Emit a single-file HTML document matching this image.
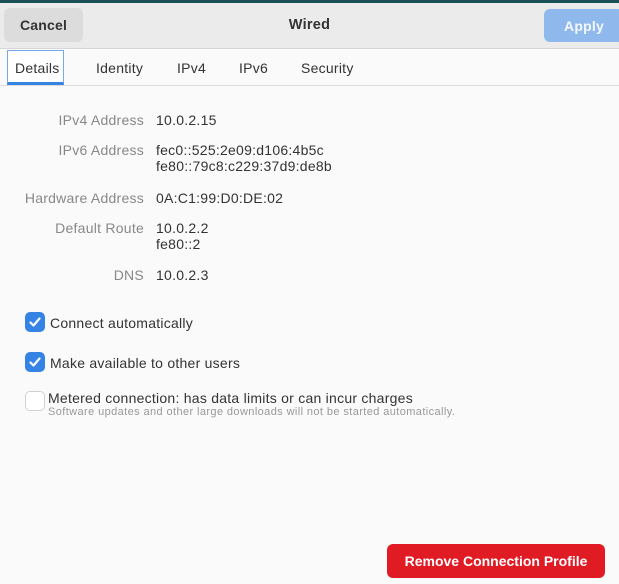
<!DOCTYPE html>
<html><head><style>
*{margin:0;padding:0;box-sizing:border-box}
body{width:619px;height:584px;overflow:hidden;background:#fafafa;font-family:"Liberation Sans",sans-serif;color:#2e3436;position:relative;font-size:14px;letter-spacing:0.25px}
.abs{position:absolute}
.top{left:0;top:0;width:619px;height:3px;background:#1c4f55}
.hdr{left:0;top:3px;width:619px;height:46px;background:#ebebeb;border-bottom:1px solid #d6d6d6}
.btn{border-radius:6px;font-weight:bold;font-size:14px;text-align:center;line-height:34px;letter-spacing:0.2px}
.tabs{left:0;top:49px;width:619px;height:37px;background:#fafafa;border-bottom:1px solid #dcdcdc}
.tab{top:10px;font-size:14px;color:#333}
.lbl{color:#888;text-align:right;right:475px;font-size:14px}
.val{left:156px;font-size:14px;color:#333;line-height:16px}
.cb{left:25px;width:20px;height:20px;border-radius:5px;background:#3584e4}
.cb svg{position:absolute;left:3px;top:3px}
.ct{left:50px;font-size:14px;color:#333}
</style></head><body>
<div class="abs top"></div>
<div class="abs hdr"></div>
<div class="abs btn" style="left:4px;top:8px;width:79px;height:34px;background:#dcdcdc;color:#333">Cancel</div>
<div class="abs" style="left:0;width:619px;top:17px;text-align:center;font-weight:bold;font-size:14.5px;color:#333">Wired</div>
<div class="abs btn" style="left:544px;top:9px;width:80px;height:33px;background:#8fb9ec;color:#f4f8fd">Apply</div>
<div class="abs tabs"></div>
<div class="abs" style="left:7px;top:50px;width:57px;height:35px;border:1px solid #76a9e8;border-bottom:3px solid #3584e4;background:#fff"></div>
<div class="abs tab" style="left:15px;top:60px">Details</div>
<div class="abs tab" style="left:96px;top:60px">Identity</div>
<div class="abs tab" style="left:177px;top:60px">IPv4</div>
<div class="abs tab" style="left:239px;top:60px">IPv6</div>
<div class="abs tab" style="left:301px;top:60px">Security</div>

<div class="abs lbl" style="top:112px">IPv4 Address</div>
<div class="abs val" style="top:112px">10.0.2.15</div>
<div class="abs lbl" style="top:142px">IPv6 Address</div>
<div class="abs val" style="top:142px">fec0::525:2e09:d106:4b5c<br>fe80::79c8:c229:37d9:de8b</div>
<div class="abs lbl" style="top:190px">Hardware Address</div>
<div class="abs val" style="top:190px">0A:C1:99:D0:DE:02</div>
<div class="abs lbl" style="top:220px">Default Route</div>
<div class="abs val" style="top:220px">10.0.2.2<br>fe80::2</div>
<div class="abs lbl" style="top:267px">DNS</div>
<div class="abs val" style="top:267px">10.0.2.3</div>

<div class="abs cb" style="top:312px"><svg width="14" height="14" viewBox="0 0 14 14"><path d="M2.5 7.5 L5.5 10.5 L11.5 3.5" stroke="#fff" stroke-width="2.2" fill="none" stroke-linecap="round" stroke-linejoin="round"/></svg></div>
<div class="abs ct" style="top:315px">Connect automatically</div>
<div class="abs cb" style="top:352px"><svg width="14" height="14" viewBox="0 0 14 14"><path d="M2.5 7.5 L5.5 10.5 L11.5 3.5" stroke="#fff" stroke-width="2.2" fill="none" stroke-linecap="round" stroke-linejoin="round"/></svg></div>
<div class="abs ct" style="top:355px">Make available to other users</div>
<div class="abs cb" style="top:391px;background:#fff;border:1px solid #d0d0d0"></div>
<div class="abs ct" style="left:48px;top:390px">Metered connection: has data limits or can incur charges</div>
<div class="abs" style="left:48px;top:406px;font-size:11px;letter-spacing:0.4px;color:#999">Software updates and other large downloads will not be started automatically.</div>

<div class="abs btn" style="left:387px;top:544px;width:218px;height:34px;background:#e01b24;color:#fff;letter-spacing:0">Remove Connection Profile</div>
</body></html>
